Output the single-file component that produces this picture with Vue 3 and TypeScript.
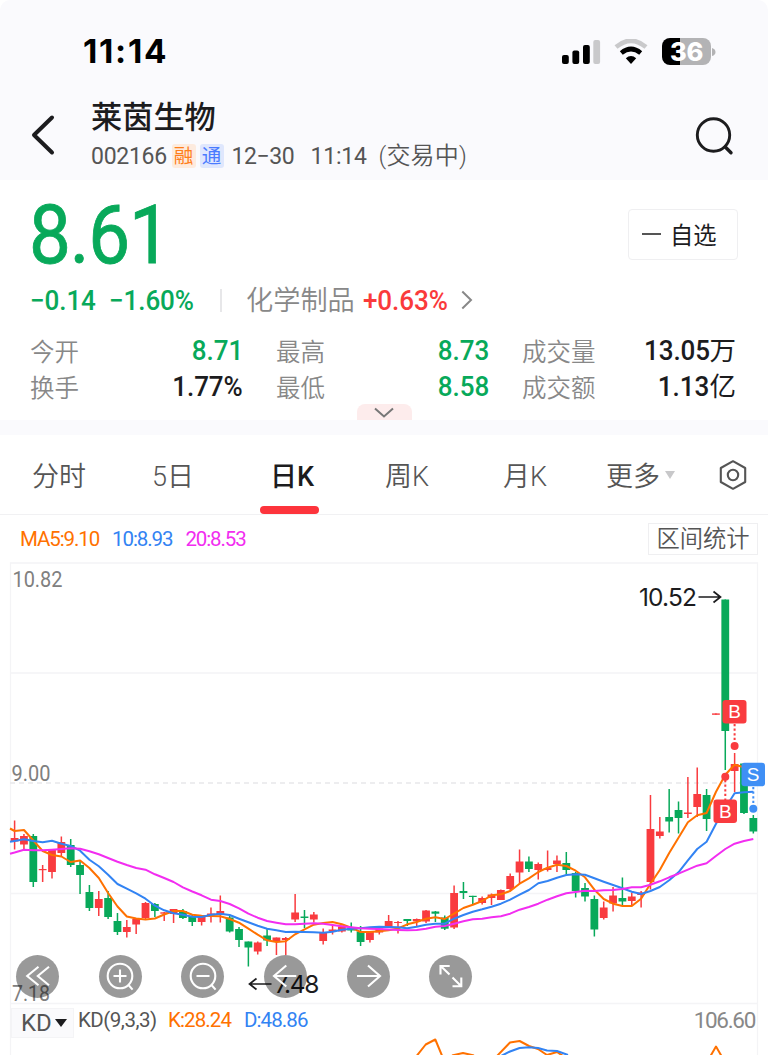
<script setup lang="ts">
type Candle = [top: number, bottom: number, high: number, low: number, rising: 0 | 1]

const candles: Candle[] = [
  [838, 841.5, 820.5, 849.5, 1], [836, 844.5, 834, 850, 1], [836, 882, 834, 887, 0], [869, 870.2, 865, 882, 1],
  [850, 872, 850, 878.5, 1], [842, 853, 836.5, 857, 1], [845, 865, 839, 867, 0], [865, 875, 861, 894, 0],
  [892, 908, 885, 911, 0], [899, 908, 891, 916, 1], [898, 917, 891, 919, 0], [921, 932, 913, 935, 0],
  [927, 932, 920, 937.5, 1], [919, 924.5, 919, 934, 1], [903, 918, 902, 920, 1], [904, 911, 903, 917, 0],
  [912.3, 913.7, 912, 921, 1], [909, 914, 909, 923, 1], [911, 918, 909, 919, 0], [917, 922, 915, 926, 0],
  [917, 922, 915, 925.5, 1], [913.5, 915.5, 907.5, 922.5, 1], [911, 914, 895.5, 922.5, 1], [917.5, 931.5, 916, 932.5, 0],
  [929, 940, 927, 947, 0], [941.5, 947.5, 941.5, 966.5, 0], [942.5, 951.5, 941.5, 954.5, 1], [935.5, 940.5, 928.5, 946, 0],
  [937.5, 941.5, 937.5, 955, 1], [938, 940, 937, 955, 1], [912.5, 919.5, 894, 922, 1], [916.5, 918, 910, 928, 0],
  [914.5, 919.5, 912, 922.5, 1], [933, 941, 928.5, 944.5, 1], [929.5, 931, 924.5, 934.5, 1], [926.5, 931.5, 925.5, 932.5, 1],
  [928, 930.5, 922.5, 932.5, 0], [931.5, 942, 926, 946, 0], [932, 940, 931, 942.5, 1], [928.5, 932.5, 927.5, 934.5, 1],
  [921, 927, 915, 928, 1], [922, 923, 921, 933.5, 1], [919, 921, 919, 926, 0], [919, 921.3, 918.5, 926, 1],
  [910.5, 921.5, 910, 923, 1], [911.5, 913.7, 911, 922, 0], [917.5, 928.7, 915.5, 930, 0], [893, 927.5, 885.5, 929, 1],
  [891, 893, 882, 899, 0], [895.8, 897, 895.8, 904, 0], [898, 903, 896.5, 904.5, 1], [894.5, 898, 893.5, 905, 1],
  [890, 900, 889.5, 900, 1], [876, 889, 873.5, 890, 1], [861.5, 872.5, 849.5, 884, 1], [861.5, 869, 856.5, 872, 0],
  [864, 870, 862.5, 879.5, 1], [868, 870, 850.5, 871.5, 1], [860.5, 864, 855.5, 872, 1], [863, 870, 852, 874.5, 0],
  [873, 891, 872, 897.5, 0], [888, 896.5, 883, 901.5, 0], [899, 929.5, 895.5, 936.5, 0], [907.5, 918, 901.5, 919.5, 1],
  [895.5, 903.5, 887, 911.5, 1], [898, 901.5, 877.5, 906, 0], [896.5, 901, 892.5, 905, 1], [892.5, 895, 891, 907.5, 1],
  [829, 882, 795, 889.5, 1], [831.5, 836, 817, 838.5, 1], [817, 821.5, 789, 832.5, 0], [810, 818, 801.5, 833.5, 0],
  [812.5, 814, 777, 818, 1], [794, 807, 767.5, 817, 1], [795, 819, 789, 831, 0], [713.4, 714.8, 713.4, 714.8, 1],
  [599.5, 731, 599.5, 770, 0], [764, 771, 753, 792, 1], [763.5, 813, 763.5, 814, 0], [818, 831.5, 815, 833.5, 0],
]

const ma5 = [831, 830, 840.5, 851, 855, 856.5, 862, 860.5, 868, 878, 893, 906.5, 916.5, 918.5, 919.5, 918.5, 914.5, 911, 911,
  914.7, 915.7, 916, 916.3, 919, 922.7, 928.7, 934.7, 940.3, 942, 941.3, 934.3, 929.3, 924.7, 923, 922, 924.3, 927.7, 932, 932, 931.3,
  930.3, 928.5, 924.3, 922, 918.7, 917.3, 919, 913.7, 908, 904.7, 901, 895.3, 894.3, 891, 883.7, 878.3, 872, 867.7, 864.7, 866,
  870.7, 877.3, 889.7, 899, 903.7, 906, 906, 898.7, 883.7, 870, 853, 837.7, 822.3, 815.3, 813, 792, 774.7, 764.7, 767.3, 774]
const ma10 = [841, 839.3, 841, 842.3, 840.7, 843.7, 846, 850.7, 859.7, 866.3, 874.7, 884, 888.7, 893.3, 898.7, 905.7, 910.3, 913.3,
  914.7, 916.7, 917, 914.7, 913.7, 915, 918.7, 922.3, 925.7, 928.7, 930.3, 932, 931.7, 932, 932.3, 932.7, 931.7, 929.7, 928.7, 928.3,
  927.3, 926.7, 927, 927.3, 928.3, 926.7, 924.7, 923.7, 923.7, 918.7, 915, 911.7, 909.3, 906.7, 903.7, 899.7, 894.7, 890, 883.3, 881,
  877.7, 875, 874.3, 874.7, 878.3, 881.7, 885, 888.3, 891.7, 894, 891, 887, 880.3, 872.3, 860.3, 849, 841.7, 824, 808, 793.3, 792.3, 791.7]
const ma20 = [852.5, 849.7, 850.3, 850.3, 849.7, 849, 848.3, 848.7, 851.3, 854.3, 858, 861.7, 865, 868, 869.7, 874.3, 878, 882,
  887.3, 891.5, 895.3, 899.7, 901, 904, 908.3, 913.7, 917.7, 921, 922.7, 924.3, 924.3, 923.7, 923.3, 923.7, 925, 926.3, 927.3, 928.3,
  928.7, 929, 929.5, 930, 930.3, 930, 928.7, 926.7, 926, 923.7, 921.3, 919.3, 918.7, 917.3, 916.3, 913.7, 909.7, 907, 903.7, 899.7,
  896.3, 893.3, 892, 890.7, 891, 890.3, 890, 889, 887.3, 887.3, 884.7, 881.3, 877.3, 873.7, 869.7, 865.7, 863.3, 856, 849, 843.7, 841, 839]

const xOf = (i: number) => 14.6 + i * 9.351
const line = (start: number, ys: number[]) =>
  `10,${start} ` + ys.map((y, i) => `${xOf(i).toFixed(1)},${y}`).join(' ')

const stats = [
  { label: '今开', value: '8.71', unit: '', tone: 'down' },
  { label: '最高', value: '8.73', unit: '', tone: 'down' },
  { label: '成交量', value: '13.05', unit: '万', tone: 'flat' },
  { label: '换手', value: '1.77%', unit: '', tone: 'flat' },
  { label: '最低', value: '8.58', unit: '', tone: 'down' },
  { label: '成交额', value: '1.13', unit: '亿', tone: 'flat' },
]

const lens = 'M34.3 22a12.3 12.3 0 1 1-24.6 0a12.3 12.3 0 1 1 24.6 0M30.7 31.2 34.6 35.6M15.5 22h13'
const tools = [
  { name: 'rewind', d: 'M22.5 12.8 11.2 22 22.5 31.2M33 12.8 21.8 22 33 31.2' },
  { name: 'zoom-in', d: lens + 'M22 15.5v13' },
  { name: 'zoom-out', d: lens },
  { name: 'left', d: 'M32.3 22H10M22.3 11.5 10 22 22.3 32.5' },
  { name: 'right', d: 'M11 22H33.7M22 11.5 34 22 22 32.5' },
  { name: 'expand', d: 'M20.5 20.5 11.7 12M11.5 20.5V12H20.7M23.5 23.5 32 32M32.3 23.5V32.3H23.5' },
]
</script>

<template>
  <main class="screen">
    <header class="top">
      <div class="status">
        <span class="clock">11:14</span>
        <div class="signals">
          <svg class="bars" width="40" height="26" viewBox="0 0 40 26">
            <rect x="1" y="16" width="6.8" height="9" rx="2" />
            <rect x="11.4" y="11.5" width="6.8" height="13.5" rx="2" />
            <rect x="22" y="6" width="6.8" height="19" rx="2" />
            <rect x="32.3" y="1" width="6.8" height="24" rx="2" fill="#c9c9cb" />
          </svg>
          <svg class="wifi" width="34" height="26" viewBox="0 0 34 26" fill="none">
            <path d="M2 8Q17-4.5 32 8" stroke="#c9c9cb" stroke-width="4.6" />
            <path d="M7.3 14Q17 6 26.7 14" stroke="#000" stroke-width="4.6" />
            <path d="M11.8 19.2Q17 15 22.2 19.2L17 25Z" fill="#000" />
          </svg>
          <div class="battery"><span>36</span></div>
          <svg class="nub" width="4" height="10" viewBox="0 0 4 10"><path d="M0 1Q3.5 2 3.5 5T0 9Z" fill="#b3b3b5" /></svg>
        </div>
      </div>
      <div class="titlebar">
        <svg class="back" width="26" height="42" viewBox="0 0 26 42" fill="none" stroke="#1c1c1e" stroke-width="4" stroke-linecap="round" stroke-linejoin="round">
          <path d="M22 3.5 4 21 22 38.5" />
        </svg>
        <div class="names">
          <h1>莱茵生物</h1>
          <p class="meta">
            <span class="code">002166</span>
            <span class="tag warm">融</span>
            <span class="tag cool">通</span>
            <span class="date">12−30</span>
            <span class="time">11:14</span>
            <span class="state"><i>(</i>交易中<i>)</i></span>
          </p>
        </div>
        <svg class="search" width="42" height="42" viewBox="0 0 42 42" fill="none" stroke="#1c1c1e" stroke-width="2.9" stroke-linecap="round">
          <circle cx="20.5" cy="20" r="16.2" /><path d="M32.3 32 38 37.8" stroke-width="3.4" />
        </svg>
      </div>
    </header>

    <section class="quote">
      <div class="price-row">
        <strong class="price">8.61</strong>
        <button class="watch"><i></i>自选</button>
      </div>
      <div class="change">
        <span class="num down diff">−0.14</span>
        <span class="num down pct">−1.60%</span>
        <i class="bar"></i>
        <span class="sector">化学制品</span>
        <span class="num up">+0.63%</span>
        <svg width="14" height="20" viewBox="0 0 14 20" fill="none" stroke="#888" stroke-width="2"><path d="M2.3 1.5 11 10 2.3 18.5" /></svg>
      </div>
      <dl class="stats">
        <div v-for="s in stats" :key="s.label">
          <dt>{{ s.label }}</dt>
          <dd :class="s.tone"><span class="num">{{ s.value }}</span><span v-if="s.unit" class="unit">{{ s.unit }}</span></dd>
        </div>
      </dl>
      <div class="more-handle">
        <svg width="22" height="12" viewBox="0 0 22 12" fill="none" stroke="#777" stroke-width="2"><path d="M2 1.5 11 9.5 20 1.5" /></svg>
      </div>
    </section>

    <nav class="tabs">
      <span class="tab t1">分时</span>
      <span class="tab t2">5日</span>
      <span class="tab t3 active">日K</span>
      <span class="tab t4">周K</span>
      <span class="tab t5">月K</span>
      <span class="tab t6">更多<i class="caret"></i></span>
      <svg class="gear" width="30" height="32" viewBox="0 0 30 32" fill="none" stroke="#555" stroke-width="2.1" stroke-linejoin="round">
        <path d="M15 2.2 27.2 9V23L15 29.8 2.8 23V9Z" /><circle cx="15" cy="16" r="5.2" />
      </svg>
    </nav>

    <section class="chart">
      <div class="legend">
        <span class="ma orange">MA5:9.10</span>
        <span class="ma blue">10:8.93</span>
        <span class="ma pink">20:8.53</span>
        <button class="range">区间统计</button>
      </div>
      <svg class="plot" width="768" height="497" viewBox="0 558 768 497">
        <g fill="none" stroke="#f4f4f6" stroke-width="1.3">
          <path d="M10.5 1055V563H757.5V1055M10 673H757M10 893.5H757M10 1003.5H757" />
          <path d="M10 783H757" stroke="#e8e8ea" stroke-dasharray="5 4" />
        </g>
        <g class="axis">
          <text x="12.5" y="586.5" textLength="50" lengthAdjust="spacingAndGlyphs">10.82</text>
          <text x="11.5" y="781" textLength="39" lengthAdjust="spacingAndGlyphs">9.00</text>
          <text x="12" y="1001" textLength="38" lengthAdjust="spacingAndGlyphs">7.18</text>
        </g>
        <g v-for="(c, i) in candles" :key="i" :class="c[4] ? 'rise' : 'fall'">
          <rect :x="xOf(i) - 0.75" :y="c[2]" width="1.5" :height="c[3] - c[2]" />
          <rect :x="xOf(i) - 3.9" :y="c[0]" width="7.8" :height="c[1] - c[0]" />
        </g>
        <g fill="none" stroke-width="2" stroke-linejoin="round">
          <polyline :points="line(828.5, ma5)" stroke="#ff7100" />
          <polyline :points="line(841.8, ma10)" stroke="#3283f3" />
          <polyline :points="line(853.7, ma20)" stroke="#f22df0" />
          <path d="M415 1058 425.7 1044.5 435.3 1039.5 443 1058M452 1055.5 463 1053 474 1055.5M497 1056 510 1042.5 519.6 1041 529 1046 538 1049 547 1055 557 1052 563 1056M710.5 1056 716 1046.5 721.5 1056" stroke="#ff7100" />
          <path d="M501 1056 510 1051.5 519.6 1048 529 1047.3 538 1048 547 1050.5 557 1051 568 1055" stroke="#3283f3" />
        </g>
        <g class="callout">
          <text x="639" y="605.5" textLength="58">10.52</text>
          <text x="274.5" y="992.5" textLength="45">7.48</text>
          <path d="M698.5 597H720M713.5 591.5 720.5 597 713.5 602.5M271.5 984H250M256.5 978.5 249.5 984 256.5 989.5" />
        </g>
        <g fill="none" stroke-width="2" stroke-dasharray="2.2 2.4">
          <path d="M734.6 724V742M725.3 780V800" stroke="#f93b3f" />
          <path d="M753.3 787V806" stroke="#3f8ff5" />
        </g>
        <g fill="#f93b3f">
          <circle cx="734.6" cy="746" r="4" /><circle cx="725.3" cy="776.7" r="4" />
          <rect x="722.5" y="700" width="24" height="23.5" rx="3" /><rect x="713.5" y="799.5" width="23.5" height="23.5" rx="3" />
        </g>
        <g fill="#3f8ff5"><circle cx="753.3" cy="808.8" r="4" /><rect x="741.5" y="762.7" width="23.5" height="23.5" rx="3" /></g>
        <g class="mark">
          <text x="734.5" y="718.3">B</text><text x="725.3" y="817.8">B</text><text x="753.2" y="781">S</text>
        </g>
      </svg>
      <div class="tools">
        <button v-for="t in tools" :key="t.name" :aria-label="t.name">
          <svg width="44" height="44" viewBox="0 0 44 44"><path :d="t.d" /></svg>
        </button>
      </div>
      <div class="indicator">
        <span class="picker">KD<i></i></span>
        <span class="params">KD(9,3,3)</span>
        <span class="k">K:28.24</span>
        <span class="d">D:48.86</span>
        <span class="max">106.60</span>
      </div>
    </section>
  </main>
</template>

<style>
body { background: #fff; }
</style>

<style scoped>
.screen { width: 768px; height: 1055px; overflow: hidden; background: #fff; color: #1c1c1e; font-family: Roboto, "Noto Sans CJK SC", sans-serif; }
h1, p, dl, dd, dt { margin: 0; font-weight: 400; }
i { font-style: normal; }
button { font: inherit; padding: 0; margin: 0; border: 0; background: none; color: inherit; }
span, h1, button, dt, dd, strong { white-space: nowrap; }
.top { height: 180px; background: #fafafd; border-radius: 10px 10px 0 0; }
.status { height: 94px; padding: 0 52px 0 83px; display: flex; align-items: flex-start; justify-content: space-between; }
.clock { margin-top: 30px; font: 750 33.3px/43px Inter, sans-serif; letter-spacing: 1.7px; color: #000; }
.signals { margin-top: 38px; display: flex; align-items: center; }
.wifi { margin-left: 13px; }
.battery { margin-left: 14px; width: 49px; height: 27px; border-radius: 8px; background: linear-gradient(90deg, #000 36%, #b3b3b5 36%); color: #fff; font: 800 25.5px/27px Inter, sans-serif; text-align: center; letter-spacing: -.3px; }
.nub { margin-left: 1px; }
.titlebar { display: flex; padding: 0 33px 0 30px; }
.back { margin-top: 20px; }
.names { margin-left: 35px; flex: 1; }
h1 { padding-top: 1px; font-size: 31.2px; line-height: 46px; font-weight: 500; }
.meta { display: flex; align-items: center; height: 30px; font-size: 23px; color: #555; }
.code { width: 80.5px; letter-spacing: -.3px; }
.tag { width: 24px; height: 24px; margin-right: 4px; border-radius: 3px; font-size: 19.5px; line-height: 26px; text-align: center; }
.warm { background: #fdebde; color: #ff7e1a; }
.cool { background: #dfe7fd; color: #4a7bff; }
.date { margin-left: 4px; width: 79px; letter-spacing: -.4px; }
.time { width: 68px; letter-spacing: -.2px; }
.state { font-size: 24px; font-weight: 350; line-height: 28px; letter-spacing: .2px; }
.search { margin-top: 20.5px; }

.quote { position: relative; height: 255px; padding: 0 32px 0 30px; border-bottom: 15px solid #fafafd; box-sizing: border-box; }
.price-row { height: 101px; display: flex; justify-content: space-between; align-items: flex-start; margin-right: -2px; }
.price { margin: 5px 0 0 -1px; font-size: 82px; line-height: 100px; font-weight: 450; letter-spacing: -1.3px; color: #08a95a; -webkit-text-stroke: .8px #08a95a; transform: scaleX(.91); transform-origin: left; }
.watch { margin-top: 29px; width: 110px; height: 51px; border: 1.3px solid #efeff1; border-radius: 4px; box-sizing: border-box; display: flex; align-items: center; padding: 0 0 1px 13px; font-size: 23.3px; }
.watch i { width: 19px; height: 2px; background: #555; margin-right: 9px; }
.num { display: inline-block; font-size: 28px; font-weight: 500; letter-spacing: -.1px; transform: scaleX(.93); transform-origin: left; }
.down { color: #08a95a; }
.up { color: #fa3a3b; }
.flat { color: #1c1c1e; }
.change { height: 38px; display: flex; align-items: center; }
.diff { width: 79px; }
.pct { width: 111px; }
.bar { width: 1.5px; height: 23px; background: #e7e7e9; margin-right: 24.5px; }
.sector { width: 117px; font-size: 27.2px; line-height: 30px; margin-top: 2px; color: #888; font-weight: 350; }
.up { width: 84px; }
.change svg { margin-left: 12.5px; }
.stats { margin-top: 14px; display: grid; grid-template-columns: 213px 213px 214px; column-gap: 33px; grid-auto-rows: 36px; }
.stats div { display: flex; justify-content: space-between; align-items: center; line-height: 36px; }
.stats .num { transform-origin: right; }
dt { padding-top: 3px; font-size: 24.5px; color: #888; font-weight: 350; }
dd { padding-top: 4px; }
.unit { font-size: 26.5px; font-weight: 400; }
.more-handle { position: absolute; left: 356.5px; bottom: 0; width: 55px; height: 16px; border-radius: 8px 8px 0 0; background: #fdecec; text-align: center; line-height: 0; padding-top: 3px; box-sizing: border-box; }

.tabs { height: 80px; box-sizing: border-box; border-bottom: 1.3px solid #f1f1f3; display: flex; align-items: center; padding-left: 32px; font-size: 27px; color: #555; font-weight: 350; }
.tab { position: relative; line-height: 84px; height: 79px; }
.t1 { width: 120px; } .t2 { width: 118px; } .t3 { width: 115px; } .t4 { width: 118px; } .t5 { width: 103px; } .t6 { width: 112px; display: flex; align-items: center; line-height: 36px; padding-top: 4px; box-sizing: border-box; }
.active { color: #1c1c1e; font-weight: 500; }
.active::after { content: ""; position: absolute; left: -10px; bottom: 0; width: 59px; height: 8px; border-radius: 4px; background: #fd343c; }
.caret { margin: -4px 0 0 4.5px; border: 5.5px solid transparent; border-top: 8px solid #c8c8ca; border-bottom: 0; }

.chart { position: relative; height: 541px; }
.legend { height: 43px; display: flex; align-items: center; padding: 5px 10px 0 20px; box-sizing: border-box; font-size: 20.5px; }
.ma { margin-right: 13px; letter-spacing: -1.1px; }
.orange, .k { color: #ff7100; } .blue, .d { color: #3283f3; } .pink { color: #f22df0; }
.range { margin-left: auto; width: 110px; height: 32px; border: 1.3px solid #efeff1; box-sizing: border-box; font-size: 23.3px; line-height: 28px; color: #555; font-weight: 350; }
.plot { display: block; }
.rise { fill: #f93b3f; } .fall { fill: #08a95a; }
.axis { font-size: 22.5px; fill: #808080; }
.callout { font: 24.5px Inter, sans-serif; fill: #1c1c1e; }
.callout path { fill: none; stroke: #1c1c1e; stroke-width: 1.7; }
.mark { font: 19px "Liberation Sans", sans-serif; fill: #fff; text-anchor: middle; }
.tools { position: absolute; left: 16px; top: 439.5px; display: flex; gap: 39.7px; }
.tools button { width: 43px; height: 43px; border-radius: 50%; background: rgba(0, 0, 0, .4); line-height: 0; }
.tools svg { margin: -.5px; fill: none; stroke: #fff; stroke-width: 2.1; }
.indicator { position: absolute; left: 11px; top: 493px; width: 745px; height: 30px; display: flex; font-size: 20.5px; line-height: 24px; color: #555; }
.picker { width: 63px; height: 30px; box-sizing: border-box; padding-left: 9px; border: 1px solid #f4f4f6; background: #fafafc; font-size: 24px; line-height: 29px; display: flex; align-items: center; }
.picker i { margin-left: 3px; border: 6px solid transparent; border-top: 8px solid #1c1c1e; border-bottom: 0; }
.params { width: 90px; margin-left: 4px; letter-spacing: -.5px; }
.k, .d { letter-spacing: -.9px; }
.k { width: 76px; }
.max { margin: 0 1px 0 auto; font-size: 22.5px; letter-spacing: -1.3px; color: #888; }
</style>
